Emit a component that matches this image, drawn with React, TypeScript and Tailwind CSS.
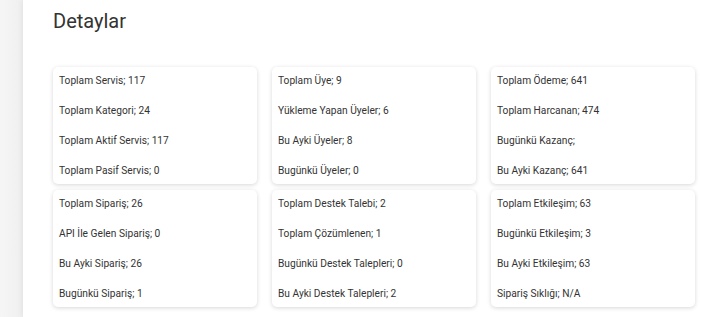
import React from "react";

const cards: string[][] = [
  ["Toplam Servis; 117", "Toplam Kategori; 24", "Toplam Aktif Servis; 117", "Toplam Pasif Servis; 0"],
  ["Toplam Üye; 9", "Yükleme Yapan Üyeler; 6", "Bu Ayki Üyeler; 8", "Bugünkü Üyeler; 0"],
  ["Toplam Ödeme; 641", "Toplam Harcanan; 474", "Bugünkü Kazanç;", "Bu Ayki Kazanç; 641"],
  ["Toplam Sipariş; 26", "API İle Gelen Sipariş; 0", "Bu Ayki Sipariş; 26", "Bugünkü Sipariş; 1"],
  ["Toplam Destek Talebi; 2", "Toplam Çözümlenen; 1", "Bugünkü Destek Talepleri; 0", "Bu Ayki Destek Talepleri; 2"],
  ["Toplam Etkileşim; 63", "Bugünkü Etkileşim; 3", "Bu Ayki Etkileşim; 63", "Sipariş Sıklığı; N/A"],
];

export default function App() {
  return (
    <div
      className="flex h-[317px] w-[708px] overflow-hidden bg-[#f4f4f4]"
      style={{ fontFamily: "Roboto, 'Noto Sans', sans-serif" }}
    >
      <div className="w-[23px] shrink-0 bg-gradient-to-r from-[#f6f6f6] to-[#efefef]" />
      <div className="flex-1 bg-white pl-[30px] pt-[9px] shadow-[0_0_6px_rgba(0,0,0,0.08)]">
        <h1 className="text-[20px] leading-[24px] font-normal text-[#333]">Detaylar</h1>
        <div className="mt-[34px] grid grid-cols-[204px_204px_204px] gap-x-[15px] gap-y-[6px]">
          {cards.map((rows, i) => (
            <div
              key={i}
              className="flex flex-col gap-[14px] rounded-[5px] bg-white pl-[6px] pt-[6px] pb-[5px] shadow-[0_1px_4px_rgba(0,0,0,0.16)]"
            >
              {rows.map((r) => (
                <div key={r} className="text-[10.2px] leading-[16px] text-[#333]">
                  {r}
                </div>
              ))}
            </div>
          ))}
        </div>
      </div>
    </div>
  );
}
